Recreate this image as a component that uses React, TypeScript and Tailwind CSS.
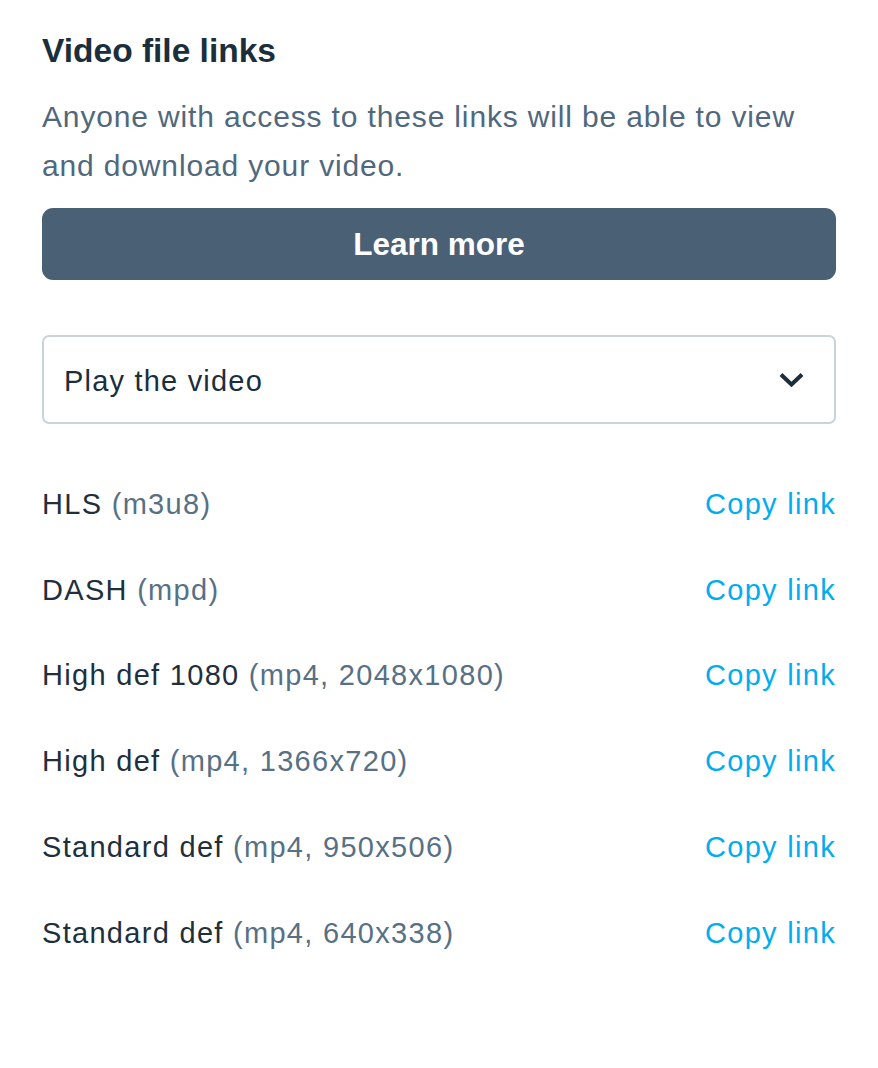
import React from 'react';

type LinkRow = {
  label: string;
  detail: string;
};

const rows: LinkRow[] = [
  { label: 'HLS', detail: '(m3u8)' },
  { label: 'DASH', detail: '(mpd)' },
  { label: 'High def 1080', detail: '(mp4, 2048x1080)' },
  { label: 'High def', detail: '(mp4, 1366x720)' },
  { label: 'Standard def', detail: '(mp4, 950x506)' },
  { label: 'Standard def', detail: '(mp4, 640x338)' },
];

const Chevron = () => (
  <svg width="25" height="15" viewBox="0 0 25 15" fill="none" className="block">
    <path d="M2 2.5 L12.5 12.5 L23 2.5" stroke="#1a2e3b" strokeWidth="4" strokeLinejoin="miter" />
  </svg>
);

const App = () => {
  return (
    <div className="min-h-[1068px] w-full bg-white px-[42px] pt-[31px] font-['Liberation_Sans',Arial,sans-serif]">
      <h2 className="text-[33.5px] font-bold leading-[40px] text-[#1a2e3b]">Video file links</h2>
      <p className="mt-[22px] text-[30px] leading-[48.5px] tracking-[0.85px] text-[#51687c]">
        Anyone with access to these links will be able to view and download your video.
      </p>
      <button className="mt-[18px] flex h-[72px] w-full items-center justify-center rounded-[11px] bg-[#4a6075] text-[31.5px] font-bold leading-[36px] text-white">
        Learn more
      </button>

      <div className="mt-[55px] flex h-[89px] w-full items-center justify-between rounded-[7px] border-2 border-[#c9d3dc] pl-5 pr-[30px]">
        <span className="pt-[2px] text-[29px] leading-[34px] tracking-[1.2px] text-[#1a2e3b]">Play the video</span>
        <Chevron />
      </div>

      <div className="mt-[37px] flex flex-col">
        {rows.map((row, index) => (
          <div key={index} className="flex h-[85.8px] items-center justify-between text-[29px] leading-[34px] tracking-[1.3px]">
            <span className="text-[#1f2f3c]">
              {row.label} <span className="text-[#587084]">{row.detail}</span>
            </span>
            <button className="text-[#00adef]">Copy link</button>
          </div>
        ))}
      </div>
    </div>
  );
};

export default App;
